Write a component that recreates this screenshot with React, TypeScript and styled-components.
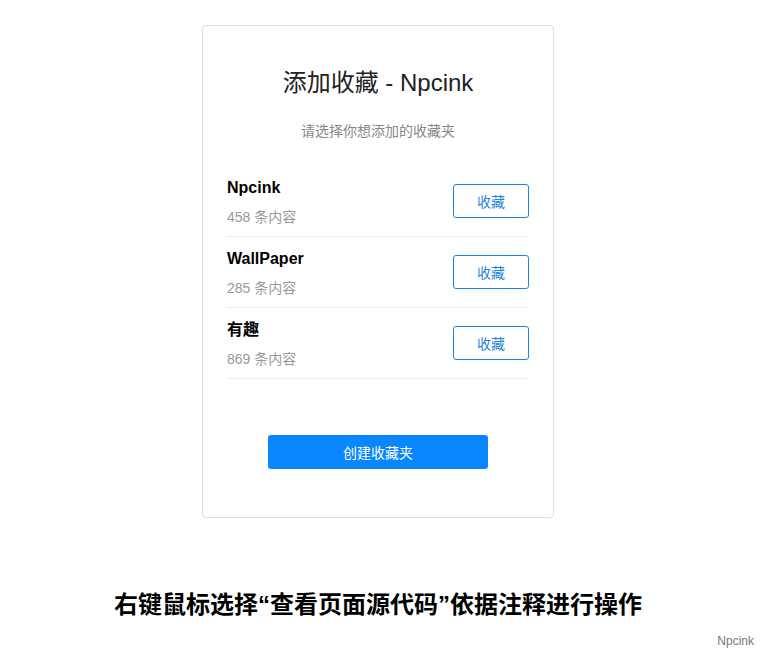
import React from 'react';
import { styled, createGlobalStyle } from 'styled-components';

const GlobalStyle = createGlobalStyle`
  html, body {
    margin: 0;
    padding: 0;
    background: #ffffff;
    font-family: 'Liberation Sans', 'Noto Sans CJK SC', sans-serif;
  }
`;

const Page = styled.div`
  width: 756px;
  display: flex;
  flex-direction: column;
  align-items: center;
  padding-top: 25px;
`;

const Card = styled.div`
  width: 352px;
  box-sizing: border-box;
  border: 1px solid #dddddd;
  border-radius: 4px;
  padding: 42px 24px 48px;
  display: flex;
  flex-direction: column;
`;

const Title = styled.h1`
  margin: 0;
  font-size: 24px;
  line-height: 30px;
  font-weight: 400;
  color: #222222;
  text-align: center;
`;

const Subtitle = styled.p`
  margin: 23px 0 25px;
  font-size: 14px;
  line-height: 20px;
  color: #888888;
  text-align: center;
`;

const List = styled.div`
  display: flex;
  flex-direction: column;
`;

const Row = styled.div`
  display: flex;
  align-items: center;
  justify-content: space-between;
  padding: 11px 0 9px;
  border-bottom: 1px solid #eeeeee;
`;

const Info = styled.div`
  display: flex;
  flex-direction: column;
  gap: 8px;
`;

const Name = styled.div`
  font-size: 16px;
  line-height: 22px;
  font-weight: 700;
  color: #000000;
`;

const Count = styled.div`
  font-size: 14px;
  line-height: 20px;
  color: #999999;
`;

const CollectButton = styled.button`
  width: 76px;
  height: 34px;
  margin-top: -2px;
  box-sizing: border-box;
  border: 1px solid #1c86dc;
  border-radius: 3px;
  background: #ffffff;
  color: #1c86dc;
  font-family: inherit;
  font-size: 14px;
  padding: 0;
  cursor: pointer;
`;

const CreateButton = styled.button`
  align-self: center;
  margin-top: 56px;
  width: 220px;
  height: 34px;
  border: none;
  border-radius: 3px;
  background: #0a86ff;
  color: #ffffff;
  font-family: inherit;
  font-size: 14px;
  cursor: pointer;
`;

const Notice = styled.h2`
  margin: 72px 0 0;
  font-size: 24px;
  line-height: 30px;
  font-weight: 700;
  color: #000000;
  text-align: center;
`;

const Footer = styled.div`
  align-self: stretch;
  text-align: right;
  margin-top: 13px;
  padding-right: 2px;
  font-size: 12px;
  line-height: 16px;
  color: #777777;
`;

const folders = [
  { name: 'Npcink', count: 458 },
  { name: 'WallPaper', count: 285 },
  { name: '有趣', count: 869 },
];

const App: React.FC = () => (
  <>
    <GlobalStyle />
    <Page>
      <Card>
        <Title>添加收藏 - Npcink</Title>
        <Subtitle>请选择你想添加的收藏夹</Subtitle>
        <List>
          {folders.map((f) => (
            <Row key={f.name}>
              <Info>
                <Name>{f.name}</Name>
                <Count>{f.count} 条内容</Count>
              </Info>
              <CollectButton>收藏</CollectButton>
            </Row>
          ))}
        </List>
        <CreateButton>创建收藏夹</CreateButton>
      </Card>
      <Notice>右键鼠标选择“查看页面源代码”依据注释进行操作</Notice>
      <Footer>Npcink</Footer>
    </Page>
  </>
);

export default App;
